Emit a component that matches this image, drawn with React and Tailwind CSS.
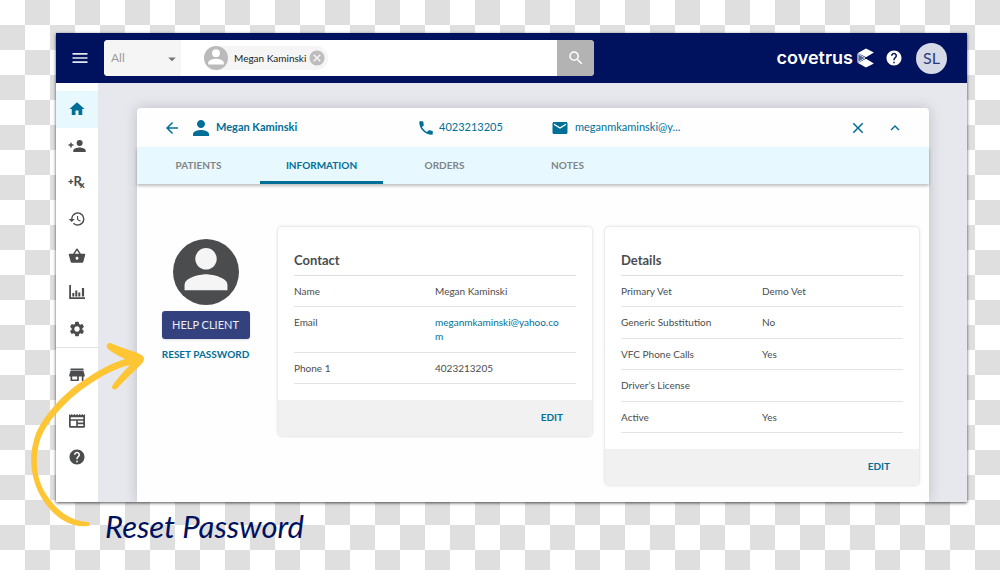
import React from "react";
import {
  MdMenu,
  MdArrowDropDown,
  MdCancel,
  MdSearch,
  MdHelp,
  MdHome,
  MdHistory,
  MdShoppingBasket,
  MdSettings,
  MdArrowBack,
  MdPerson,
  MdPhone,
  MdMail,
  MdClose,
  MdKeyboardArrowUp,
} from "react-icons/md";

function Avatar({ className, disc, figure }) {
  return (
    <svg viewBox="0 0 24 24" className={className} aria-hidden="true">
      <circle cx="12" cy="12" r="12" fill={disc} />
      <circle cx="12" cy="7.2" r="3.9" fill={figure} />
      <path d="M4.2 18.6v-1.9c0-2.6 5.2-3.9 7.8-3.9s7.8 1.3 7.8 3.9v1.9z" fill={figure} />
    </svg>
  );
}

function AddPersonIcon() {
  return (
    <svg viewBox="0 0 24 24" className="size-[18px]" fill="currentColor" aria-hidden="true">
      <circle cx="15.500" cy="8" r="4" />
      <path d="M7 20v-2c0-2.660 5.330-4 8.300-4s8.300 1.340 8.300 4v2z" />
      <path d="M3 7.500h2v2.200h2.300v2H5v2.300H3v-2.300H.7v-2H3z" />
    </svg>
  );
}

function AddRxIcon() {
  return (
    <svg viewBox="0 0 18 18" className="size-[18px]" fill="currentColor" aria-hidden="true">
      <path d="M2.200 6.200h1.400v1.700h1.700v1.400H3.600V11H2.200V9.300H.5V7.900h1.700z" />
      <text x="5.500" y="13" fontFamily="Lato, sans-serif" fontSize="13" fontWeight="700">
        R<tspan dx="-2" dy="2" fontSize="9" fontWeight="900">x</tspan>
      </text>
    </svg>
  );
}

function ChartIcon() {
  return (
    <svg viewBox="0 0 18 18" className="size-[18px]" fill="currentColor" aria-hidden="true">
      <path d="M1.200 2h1.800v12.300h14V16H1.200zM4.300 10h2v3.500h-2zM7.300 7.500h2v6h-2zM10.300 9.500h2v4h-2zM13.900 5h2.200v8.500h-2.200z" />
    </svg>
  );
}

function StoreIcon() {
  return (
    <svg viewBox="0 0 18 18" className="size-[18px]" fill="currentColor" aria-hidden="true">
      <path d="M2.500 2.500h13v1.900h-13zM2.500 5h13l1.200 3.700v1.800h-1.200V15h-1.700v-4.500H10.800V15H2.500v-4.500H1.300V8.700zM4.200 10.500v2.900h4.900v-2.900z" fillRule="evenodd" />
    </svg>
  );
}

function NewsIcon() {
  return (
    <svg viewBox="0 0 18 18" className="size-[18px]" fill="currentColor" aria-hidden="true">
      <path
        d="M1 2l1.300 1.200L3.700 2 5 3.200 6.300 2l1.400 1.200L9 2l1.300 1.200L11.700 2 13 3.200 14.300 2l1.400 1.200L17 2v12.500a1.300 1.300 0 0 1-1.300 1.300H2.300A1.300 1.300 0 0 1 1 14.500zM2.700 5.200v2h12.600v-2zM2.700 8.800v5.300h5.500V8.800zM9.800 8.800v1.800h5.500V8.800zM9.800 12.200v1.900h5.500v-1.900z"
        fillRule="evenodd"
      />
    </svg>
  );
}

function CovetrusMark() {
  return (
    <svg viewBox="0 0 17 20" className="h-5 w-[17px]" aria-hidden="true">
      <path d="M9 .4l7.900 4.100L9 9.200.9 4.900z" fill="#fff" />
      <path d="M9 10.800l7.900 4.700L9 19.600.9 15.100z" fill="#fff" />
      <path d="M.9 5.600L8 10 .9 14.400z" fill="#00115e" stroke="#fff" strokeWidth="0.9" strokeLinejoin="round" />
      <path d="M1 5.800L8 10 1 14.200z" fill="#fff" opacity=".35" />
    </svg>
  );
}

const primaryNav = [
  { label: "Home", icon: <MdHome className="size-[18px]" />, active: true },
  { label: "Add client", icon: <AddPersonIcon /> },
  { label: "Add prescription", icon: <AddRxIcon /> },
  { label: "History", icon: <MdHistory className="size-[18px]" /> },
  { label: "Orders", icon: <MdShoppingBasket className="size-[18px]" /> },
  { label: "Reports", icon: <ChartIcon /> },
  { label: "Settings", icon: <MdSettings className="size-[18px]" /> },
];

const tabs = ["PATIENTS", "INFORMATION", "ORDERS", "NOTES"];

const contactRows = [
  ["Name", "Megan Kaminski"],
  ["Email", "meganmkaminski@yahoo.com"],
  ["Phone 1", "4023213205"],
];

const detailRows = [
  ["Primary Vet", "Demo Vet"],
  ["Generic Substitution", "No"],
  ["VFC Phone Calls", "Yes"],
  ["Driver’s License", ""],
  ["Active", "Yes"],
];

function TopBar() {
  return (
    <header className="flex h-[50px] items-center bg-[#00115e] pr-5 pl-3.5 text-white">
      <button type="button" aria-label="Menu" className="mr-3.5 flex shrink-0 items-center">
        <MdMenu className="size-5 text-[#e4e6f0]" />
      </button>
      <form className="flex h-9 w-[490px] overflow-hidden rounded-sm bg-white" onSubmit={(e) => e.preventDefault()}>
        <div className="relative w-[77px] shrink-0 bg-[#f5f5f5]">
          <select aria-label="Search scope" className="h-full w-full appearance-none bg-transparent pl-[7px] text-xs text-[#9c9c9c] outline-none">
            <option>All</option>
          </select>
          <MdArrowDropDown className="pointer-events-none absolute top-2.5 right-0 size-[18px] text-[#757575]" />
        </div>
        <div className="flex min-w-0 flex-1 items-center pl-[23px]">
          <div className="flex h-6 shrink-0 items-center rounded-full bg-[#f5f5f5] pr-0.5">
            <Avatar className="size-6" disc="#bababa" figure="#ffffff" />
            <span className="pl-1.5 text-[10px] text-[#222]">Megan Kaminski</span>
            <button type="button" aria-label="Remove Megan Kaminski" className="ml-0.5 flex">
              <MdCancel className="size-[18px] text-[#bdbdbd]" />
            </button>
          </div>
          <input aria-label="Search" className="h-full min-w-0 flex-1 px-2 text-xs text-[#333] outline-none" />
        </div>
        <button type="submit" aria-label="Search" className="flex w-[37px] shrink-0 items-center justify-center bg-[#b3b3b3]">
          <MdSearch className="size-[18px]" />
        </button>
      </form>
      <div className="ml-auto flex items-center">
        <a href="#home" className="flex items-center gap-1">
          <span className="font-[Inter,sans-serif] text-lg leading-5 font-semibold">covetrus</span>
          <CovetrusMark />
        </a>
        <button type="button" aria-label="Help" className="ml-[11px] flex">
          <MdHelp className="size-[18px]" />
        </button>
        <button type="button" aria-label="Account" className="ml-[13px] flex size-[31px] items-center justify-center rounded-full bg-[#d6d9e6] text-base text-[#2b3a7c]">
          SL
        </button>
      </div>
    </header>
  );
}

function SideNav() {
  return (
    <nav className="w-[42px] shrink-0 bg-white pt-2 text-[#4a4c4e]">
      <div className="flex h-[257px] flex-col border-b border-[#e2e2e2]">
        {primaryNav.map((item) => (
          <a
            key={item.label}
            href="#nav"
            aria-label={item.label}
            className={
              item.active
                ? "flex flex-1 items-center justify-center bg-[#e8f8ff] text-[#006f98]"
                : "flex flex-1 items-center justify-center"
            }
          >
            {item.icon}
          </a>
        ))}
      </div>
      <div className="flex flex-col pt-[9px]">
        <a href="#store" aria-label="Store" className="mb-2.5 flex h-9 items-center justify-center">
          <StoreIcon />
        </a>
        <a href="#news" aria-label="News" className="flex h-9 items-center justify-center">
          <NewsIcon />
        </a>
        <a href="#help" aria-label="Help" className="flex h-9 items-center justify-center">
          <MdHelp className="size-[18px]" />
        </a>
      </div>
    </nav>
  );
}

function InfoCard({ title, rows, tableClass }) {
  return (
    <section className="overflow-hidden rounded-sm bg-white shadow-[0_0_3px_rgba(0,0,0,0.22)]">
      <div className="px-4 pt-6 pb-4">
        <h2 className="border-b border-[#dedede] pb-1.5 text-[13px] leading-[18px] font-bold text-[#4a4c4e]">{title}</h2>
        <table className={tableClass}>
          <tbody>
            {rows.map(([label, value]) => (
              <tr key={label} className="border-b border-[#e4e4e4]">
                <th scope="row" className="w-1/2 py-2 text-left align-top font-normal">{label}</th>
                <td className="py-2 pr-4 align-top break-all">
                  {value.includes("@") ? (
                    <a href="mailto:meganmkaminski@yahoo.com" className="text-[#006f98]">{value}</a>
                  ) : (
                    value
                  )}
                </td>
              </tr>
            ))}
          </tbody>
        </table>
      </div>
      <div className="flex h-9 items-center justify-end bg-[#f1f1f1] pr-[29px] pb-0.5">
        <button type="button" className="text-[10px] font-bold text-[#006f98]">EDIT</button>
      </div>
    </section>
  );
}

function ClientPanel() {
  return (
    <main className="min-w-0 flex-1 bg-[#e6e8ee] pt-[25px] pr-[38px] pl-[39px]">
      <div className="rounded-t-sm bg-[#fefefe] shadow-[0_0_14px_rgba(0,0,0,0.18)]">
        <div className="flex h-[39px] items-center pr-[25px] pl-[26px] text-[11px] text-[#006f98]">
          <div className="flex w-[254px] items-center">
            <button type="button" aria-label="Back" className="mr-2 flex">
              <MdArrowBack className="size-[18px]" />
            </button>
            <MdPerson className="size-6" />
            <h1 className="ml-[3px] font-bold">Megan Kaminski</h1>
          </div>
          <a href="tel:4023213205" className="flex w-[134px] items-center gap-1">
            <MdPhone className="size-[18px]" />
            4023213205
          </a>
          <a href="mailto:meganmkaminski@yahoo.com" className="flex items-center gap-1.5">
            <MdMail className="size-[18px]" />
            meganmkaminski@y...
          </a>
          <div className="ml-auto flex items-center gap-[19px]">
            <button type="button" aria-label="Close" className="flex">
              <MdClose className="size-[18px]" />
            </button>
            <button type="button" aria-label="Collapse" className="flex">
              <MdKeyboardArrowUp className="size-[18px]" />
            </button>
          </div>
        </div>
        <div role="tablist" className="flex h-[37px] bg-[#e8f8ff] shadow-[0_2px_3px_rgba(0,0,0,0.25)]">
          {tabs.map((tab) => (
            <button
              key={tab}
              type="button"
              role="tab"
              aria-selected={tab === "INFORMATION"}
              className={
                tab === "INFORMATION"
                  ? "w-[123px] border-b-3 border-[#006f98] pt-[3px] text-[10px] font-bold text-[#006f98]"
                  : "w-[123px] text-[10px] font-bold text-[#808588]"
              }
            >
              {tab}
            </button>
          ))}
        </div>
        <div className="flex items-start pt-[43px] pr-2.5 pb-[17px]">
          <div className="flex w-[141px] shrink-0 flex-col items-center pt-3 pr-1">
            <Avatar className="size-[66px]" disc="#4a4c4e" figure="#f5f5f5" />
            <button type="button" className="mt-1.5 h-7 w-[88px] rounded-[3px] bg-[#33427f] text-[11px] text-[#eceef6] shadow-sm">
              HELP CLIENT
            </button>
            <button type="button" className="mt-2 text-[10px] leading-[14px] font-bold text-[#006f98]">
              RESET PASSWORD
            </button>
          </div>
          <div className="grid flex-1 grid-cols-2 items-start gap-[13px] text-[10px] leading-[14px] text-[#4a4c4e]">
            <InfoCard title="Contact" rows={contactRows} tableClass="h-[108px] w-full table-fixed border-collapse" />
            <InfoCard title="Details" rows={detailRows} tableClass="h-[157px] w-full table-fixed border-collapse" />
          </div>
        </div>
      </div>
    </main>
  );
}

function PointerArrow() {
  return (
    <svg viewBox="0 0 160 540" className="pointer-events-none absolute top-0 left-0 h-[540px] w-40" aria-hidden="true">
      <path
        d="M88 526C70 528 54 517 43 500C30 480 29 456 34 440C38 422 62 394 82 381.500C97 371 112 363 125 359C119 356 113 353 108.500 349.500C105 347 107 342 111 343.200C119 346.500 127 349.500 135 352C139 353.500 143 355 144 358C144.500 361 142 363.500 140 365.500C132 373 124 381 117 388.500C114.500 391 110.500 388.500 112.500 385.500C117 379 123 372 130 365C117 367.500 101 376 84 388C66 401 46 422 40 440C34 460 36 480 48 497C59 513 72 521 88 522C90.500 522.500 90.500 525.500 88 526Z"
        fill="#fec534"
      />
    </svg>
  );
}

export default function App() {
  return (
    <div className="relative min-h-screen bg-[repeating-conic-gradient(#dfdfdf_0_25%,#ffffff_0_50%)] bg-size-[50px_50px] pt-[33px] pr-[33px] pl-14 font-[Lato,sans-serif]">
      <div className="shadow-[0_1px_3px_rgba(0,0,0,0.7)]">
        <TopBar />
        <div className="flex overflow-hidden">
          <SideNav />
          <ClientPanel />
        </div>
      </div>
      <p className="mt-1.5 pl-[49px] text-[31px] leading-9 text-[#00115e] italic">Reset Password</p>
      <PointerArrow />
    </div>
  );
}
